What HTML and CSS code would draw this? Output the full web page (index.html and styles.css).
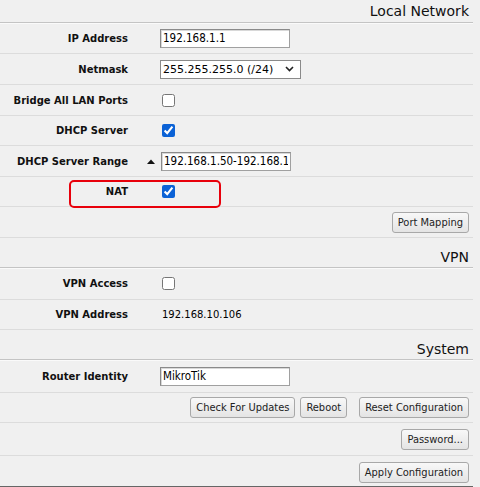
FILE: index.html
```html
<!DOCTYPE html>
<html>
<head>
<meta charset="utf-8">
<link rel="stylesheet" href="styles.css">
</head>
<body>
<div class="page">
  <div class="section-head first">Local Network</div>
  <div class="row">
    <div class="label">IP Address</div>
    <div class="value"><input class="field" type="text" value="192.168.1.1"></div>
  </div>
  <div class="row">
    <div class="label">Netmask</div>
    <div class="value">
      <div class="select"><span>255.255.255.0 (/24)</span>
        <svg class="chev" width="9" height="6" viewBox="0 0 9 6"><path d="M1 1l3.5 3.5L8 1" fill="none" stroke="#222" stroke-width="1.6"/></svg>
      </div>
    </div>
  </div>
  <div class="row">
    <div class="label">Bridge All LAN Ports</div>
    <div class="value"><input class="check" type="checkbox"></div>
  </div>
  <div class="row h30">
    <div class="label">DHCP Server</div>
    <div class="value"><input class="check" type="checkbox" checked></div>
  </div>
  <div class="row">
    <div class="label">DHCP Server Range</div>
    <div class="value range">
      <svg class="tri" width="8" height="6" viewBox="0 0 8 6"><path d="M0 6L4 1.5L8 6Z" fill="#111"/></svg>
      <input class="field" type="text" value="192.168.1.50-192.168.1.100">
    </div>
  </div>
  <div class="row h30 nat-row">
    <div class="label">NAT</div>
    <div class="value"><input class="check" type="checkbox" checked></div>
    <div class="highlight"></div>
  </div>
  <div class="row buttons">
    <button class="btn">Port Mapping</button>
  </div>
  <div class="section-head">VPN</div>
  <div class="row h32">
    <div class="label">VPN Access</div>
    <div class="value"><input class="check" type="checkbox"></div>
  </div>
  <div class="row h30">
    <div class="label">VPN Address</div>
    <div class="value text">192.168.10.106</div>
  </div>
  <div class="section-head">System</div>
  <div class="row h33">
    <div class="label">Router Identity</div>
    <div class="value"><input class="field" type="text" value="MikroTik"></div>
  </div>
  <div class="row h30 buttons">
    <button class="btn">Check For Updates</button>
    <button class="btn">Reboot</button>
    <button class="btn wide-gap">Reset Configuration</button>
  </div>
  <div class="row h33 buttons">
    <button class="btn">Password...</button>
  </div>
  <div class="row buttons last">
    <button class="btn">Apply Configuration</button>
  </div>
  <div class="cutoff">Wireless Protocol &nbsp;&nbsp; ▾ &nbsp;&nbsp; nstreme &nbsp;&nbsp; 2.4 &nbsp; Frequency mode superchannel</div>
</div>
</body>
</html>
```

FILE: styles.css
```css
html, body {
  margin: 0;
  padding: 0;
  background: #f0f0f0;
  overflow: hidden;
}
.page {
  width: 473px;
  height: 487px;
  overflow: hidden;
  font-family: "DejaVu Sans", Verdana, sans-serif;
  color: #000;
}
.section-head {
  height: 30px;
  box-sizing: border-box;
  font-size: 14px;
  padding-right: 4px;
  padding-bottom: 2px;
  display: flex;
  align-items: flex-end;
  justify-content: flex-end;
  border-bottom: 1px solid #c4c4c4;
  box-shadow: 0 1px 0 #fafafa;
  color: #111;
}
.section-head.first {
  height: 23px;
  padding-bottom: 3px;
}
.row {
  height: 31px;
  box-sizing: border-box;
  display: grid;
  grid-template-columns: 140px 1fr;
  align-items: center;
  border-bottom: 1px solid #dcdcdc;
  position: relative;
}
.row.h30 { height: 30px; }
.row.h32 { height: 32px; }
.row.h33 { height: 33px; }
.label {
  font-weight: bold;
  font-size: 10px;
  text-align: right;
  padding-right: 12px;
  color: #111;
}
.value {
  padding-left: 20px;
  display: flex;
  align-items: center;
}
.value.range {
  padding-left: 7px;
  gap: 6px;
}
.value.text {
  font-size: 10px;
  padding-left: 22px;
}
.field {
  width: 130px;
  height: 19px;
  box-sizing: border-box;
  border: 1px solid #a0a0a0;
  border-top-color: #8a8a8a;
  border-left-color: #8a8a8a;
  box-shadow: inset 1px 1px 0 #d8d8d8;
  background: #fff;
  font-family: "DejaVu Sans Condensed", "DejaVu Sans", Tahoma, sans-serif;
  font-stretch: condensed;
  font-size: 11.5px;
  padding: 0 2px;
  margin: 0;
  color: #000;
  outline: none;
}
.select {
  width: 141px;
  height: 19px;
  box-sizing: border-box;
  border: 1px solid #8a8a8a;
  background: #fff;
  font-size: 11px;
  display: flex;
  align-items: center;
  justify-content: space-between;
  padding: 0 6px 0 2px;
}
.check {
  width: 13px;
  height: 13px;
  margin: 0 0 0 2px;
  accent-color: #0b62d6;
}
.nat-row .highlight {
  position: absolute;
  left: 69px;
  top: 3px;
  width: 152px;
  height: 28px;
  box-sizing: border-box;
  border: 2px solid #e8000b;
  border-radius: 5px;
}
.buttons {
  display: flex;
  justify-content: flex-end;
  align-items: center;
  gap: 5px;
  padding-right: 4px;
}
.buttons.last {
  height: 30px;
  border-bottom: none;
  align-items: flex-start;
  padding-top: 6px;
}
.btn {
  height: 21px;
  box-sizing: border-box;
  border: 1px solid #a8a8a8;
  border-radius: 3px;
  background: linear-gradient(#f8f8f8, #e4e4e4);
  font-family: "DejaVu Sans Condensed", "DejaVu Sans", Tahoma, sans-serif;
  font-stretch: condensed;
  font-size: 11px;
  color: #222;
  padding: 0 5px;
  margin: 0;
}
.btn.wide-gap {
  margin-left: 7px;
}
.cutoff {
  border-top: 1px solid #666;
  background: #f0f0f0;
  font-size: 11px;
  color: #555;
  padding-left: 10px;
  white-space: nowrap;
  line-height: 14px;
}
```
